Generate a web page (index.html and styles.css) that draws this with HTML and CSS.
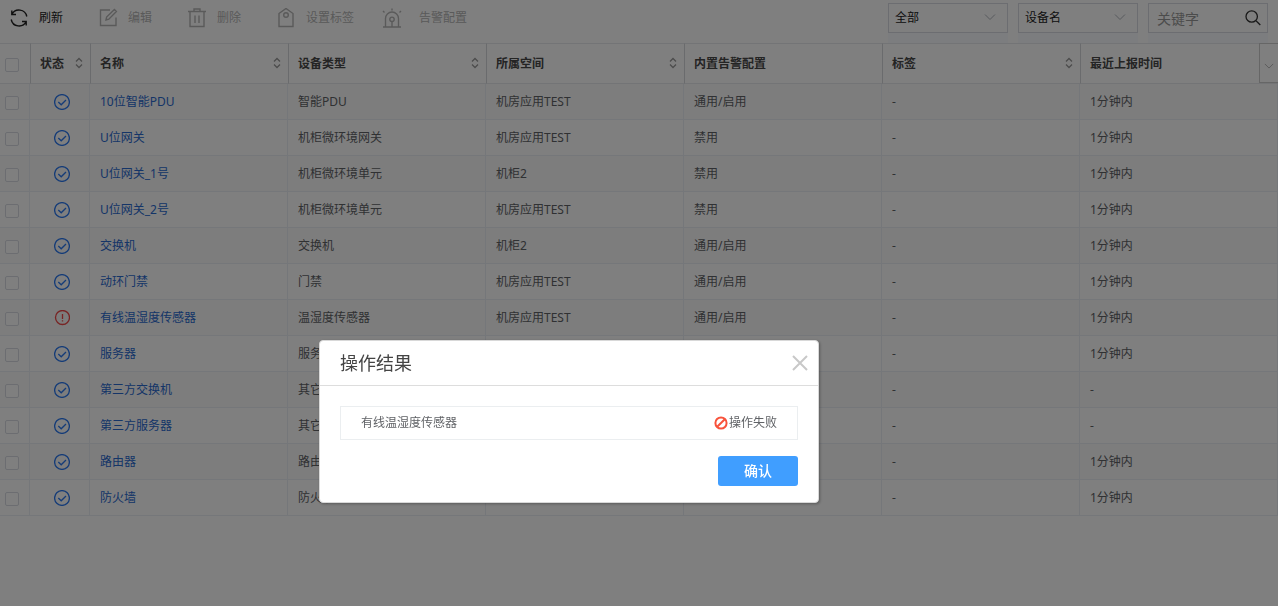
FILE: index.html
```html
<!DOCTYPE html>
<html lang="zh-CN">
<head>
  <meta charset="UTF-8" />
  <meta name="viewport" content="width=device-width, initial-scale=1.0"/>
  <title>设备管理</title>
  <link rel="stylesheet" href="styles.css">
</head>
<body>

  <svg class="sprite" aria-hidden="true">
    <symbol id="ok" viewBox="0 0 16 16">
      <circle cx="8" cy="8" r="7.4"/>
      <path d="M4.3 8L7.2 10.8L12 6"/>
    </symbol>
    <symbol id="warn" viewBox="0 0 16 16">
      <circle cx="8.5" cy="7.5" r="7"/>
      <path d="M8.5 4V9M8.5 10.2V11.4"/>
    </symbol>
    <symbol id="sort" viewBox="0 0 8 12">
      <path d="M1 4.5L4 1.5L7 4.5M1 7.5L4 10.5L7 7.5"/>
    </symbol>
    <symbol id="down" viewBox="0 0 12 8">
      <path d="M1 1.5L6 6.5L11 1.5"/>
    </symbol>
  </svg>

  <header class="toolbar">
    <div class="actions">
      <button type="button" class="action">
        <svg class="icon" viewBox="0 0 20 20"><path d="M1.8 2.5V6.5H6M1.8 6.5A8 8 0 0 1 16.8 8.5M16.2 17.5V13.5H12M16.2 13.5A8 8 0 0 1 1.2 11.5"/></svg>
        刷新
      </button>
      <button type="button" class="action" disabled>
        <svg class="icon" viewBox="0 0 20 20"><path d="M11 2H1.5V17.5H17V9.5M7 12L7.6 9L15.4 1.4L17.4 3.4L9.8 11.2Z"/></svg>
        编辑
      </button>
      <button type="button" class="action" disabled>
        <svg class="icon" viewBox="0 0 20 20"><path d="M0 3.5H18M2 3.5V18.5H16V3.5M6 3.5V1H12V3.5M7 7.5V15M11 7.5V15"/></svg>
        删除
      </button>
      <button type="button" class="action" disabled>
        <svg class="icon" viewBox="0 0 20 20"><path d="M2 5.5L9 .5L16 5.5V18.5H2Z"/><circle cx="9" cy="7" r="2.3"/></svg>
        设置标签
      </button>
      <button type="button" class="action" disabled>
        <svg class="icon icon-alarm" viewBox="0 0 20 20"><path d="M1 19H19M3.5 19V10.5A6.5 6.5 0 0 1 16.5 10.5V19M10 13.5V19M10 .5V2.5M1 3L2.5 4.5M19 3L17.5 4.5"/><circle cx="10" cy="11.3" r="2.2"/></svg>
        告警配置
      </button>
    </div>
    <div class="filters">
      <label class="field">
        <select aria-label="状态"><option>全部</option></select>
        <svg class="arrow"><use href="#down"/></svg>
      </label>
      <label class="field">
        <select aria-label="搜索字段"><option>设备名</option></select>
        <svg class="arrow"><use href="#down"/></svg>
      </label>
      <label class="field">
        <input type="text" placeholder="关键字" aria-label="关键字">
        <svg class="magnifier" viewBox="0 0 16 16"><circle cx="6.7" cy="6.5" r="5.7"/><path d="M11 10.8L15.3 15"/></svg>
      </label>
    </div>
  </header>

  <main class="list">
    <table>
      <colgroup>
        <col class="col-check"><col class="col-status">
        <col class="col-data"><col class="col-data"><col class="col-data"><col class="col-data"><col class="col-data">
        <col>
      </colgroup>
      <thead>
        <tr>
          <th class="check"><input type="checkbox" aria-label="全选"></th>
          <th>状态<svg class="sort"><use href="#sort"/></svg></th>
          <th>名称<svg class="sort"><use href="#sort"/></svg></th>
          <th>设备类型<svg class="sort"><use href="#sort"/></svg></th>
          <th>所属空间<svg class="sort"><use href="#sort"/></svg></th>
          <th>内置告警配置</th>
          <th>标签<svg class="sort"><use href="#sort"/></svg></th>
          <th>最近上报时间</th>
        </tr>
      </thead>
      <tbody id="rows"></tbody>
    </table>
    <button type="button" class="columns" aria-label="列设置"><svg><use href="#down"/></svg></button>
  </main>

  <div class="mask"></div>

  <section class="dialog" role="dialog" aria-labelledby="dialogTitle">
    <div class="dialog-head">
      <h2 id="dialogTitle">操作结果</h2>
      <button type="button" class="close" aria-label="关闭"><svg viewBox="0 0 16 16"><path d="M1 1L15 15M15 1L1 15"/></svg></button>
    </div>
    <div class="dialog-body">
      <div class="result">
        <span>有线温湿度传感器</span>
        <span class="fail"><svg viewBox="0 0 14 14"><circle cx="7" cy="7" r="5.6"/><path d="M3.2 10.8L10.8 3.2"/></svg>操作失败</span>
      </div>
      <button type="button" class="confirm">确认</button>
    </div>
  </section>

  <script>
    const devices = [
      ['ok', '10位智能PDU', '智能PDU', '机房应用TEST', '通用/启用', '-', '1分钟内'],
      ['ok', 'U位网关', '机柜微环境网关', '机房应用TEST', '禁用', '-', '1分钟内'],
      ['ok', 'U位网关_1号', '机柜微环境单元', '机柜2', '禁用', '-', '1分钟内'],
      ['ok', 'U位网关_2号', '机柜微环境单元', '机房应用TEST', '禁用', '-', '1分钟内'],
      ['ok', '交换机', '交换机', '机柜2', '通用/启用', '-', '1分钟内'],
      ['ok', '动环门禁', '门禁', '机房应用TEST', '通用/启用', '-', '1分钟内'],
      ['warn', '有线温湿度传感器', '温湿度传感器', '机房应用TEST', '通用/启用', '-', '1分钟内'],
      ['ok', '服务器', '服务器', '机柜2', '通用/启用', '-', '1分钟内'],
      ['ok', '第三方交换机', '其它', '机柜2', '通用/启用', '-', '-'],
      ['ok', '第三方服务器', '其它', '机柜2', '通用/启用', '-', '-'],
      ['ok', '路由器', '路由器', '机柜2', '通用/启用', '-', '1分钟内'],
      ['ok', '防火墙', '防火墙', '机柜2', '通用/启用', '-', '1分钟内']
    ];

    document.getElementById('rows').innerHTML = devices.map(([status, name, ...rest]) => `
      <tr>
        <td class="check"><input type="checkbox" aria-label="${name}"></td>
        <td class="status"><svg class="${status}"><use href="#${status}"/></svg></td>
        <td><a href="#">${name}</a></td>
        ${rest.map(text => `<td>${text}</td>`).join('')}
      </tr>`).join('');
  </script>
</body>
</html>
```
FILE: styles.css
```css
* {
  box-sizing: border-box;
}
body {
  margin: 0;
  font-family: "Noto Sans", "Noto Sans CJK SC", sans-serif;
  font-size: 12px;
  line-height: 18px;
  color: #606266;
  background: #fff;
}
svg {
  fill: none;
  stroke: currentColor;
}
button, input, select {
  font: inherit;
  color: inherit;
  margin: 0;
}
button {
  border: none;
  background: none;
  padding: 0;
}
.sprite {
  position: absolute;
  width: 0;
  height: 0;
}

/* toolbar */
.toolbar {
  display: flex;
  justify-content: space-between;
  height: 43px;
  padding: 3px 10px 0;
}
.actions {
  display: flex;
  gap: 36px;
  height: 30px;
}
.action {
  display: flex;
  align-items: center;
  gap: 9px;
  color: #222;
}
.action:disabled {
  color: #b4b4b4;
}
.icon {
  width: 20px;
  height: 20px;
  stroke-width: 1.4;
}
.icon-alarm {
  margin: 0 8px 0 -8px;
}
.filters {
  display: flex;
  gap: 10px;
}
.field {
  position: relative;
  width: 120px;
  background: #f9fafe;
}
.field select,
.field input {
  display: block;
  width: 100%;
  height: 30px;
  padding: 0 6px;
  border: 1px solid #d8dbe2;
  border-radius: 0;
  background: #fff;
  color: #222;
  appearance: none;
}
.field input {
  padding: 0 8px;
  font-size: 14px;
}
.field input::placeholder {
  color: #999;
}
.arrow {
  position: absolute;
  top: 10px;
  right: 12px;
  width: 12px;
  height: 8px;
  color: #b0b4bc;
}
.magnifier {
  position: absolute;
  top: 7px;
  right: 7px;
  width: 16px;
  height: 16px;
  color: #333;
  stroke-width: 1.3;
}

/* device table */
.list {
  position: relative;
}
table {
  width: 100%;
  table-layout: fixed;
  border-collapse: separate;
  border-spacing: 0;
}
.col-check {
  width: 30px;
}
.col-status {
  width: 60px;
}
.col-data {
  width: 198px;
}
th {
  position: relative;
  height: 41px;
  padding: 0 9px;
  border: 1px solid #e6e8ec;
  border-width: 1px 0 1px 1px;
  border-left-color: #d4d6da;
  text-align: left;
  color: #484848;
}
th.check {
  border-left: none;
}
td {
  height: 36px;
  padding: 0 10px;
  border: 1px solid #ebeef5;
  border-width: 0 1px 1px 0;
}
tbody tr:nth-child(odd) {
  background: #fafafa;
}
th.check,
td.check {
  padding: 3px 0 0 5px;
}
.check input {
  display: block;
  width: 14px;
  height: 14px;
  border: 1px solid #d8dbe2;
  border-radius: 2px;
  background: #fff;
  appearance: none;
}
.sort {
  position: absolute;
  top: 13px;
  right: 7px;
  width: 8px;
  height: 12px;
  color: #999;
  stroke-width: 1.3;
}
.status {
  padding: 0 0 0 24px;
}
.status svg {
  display: block;
  width: 16px;
  height: 16px;
  stroke-width: 1.3;
}
.ok {
  color: #2a78f0;
}
.warn {
  color: #f04848;
}
td a {
  color: #2a6ad0;
  text-decoration: none;
}
.columns {
  position: absolute;
  top: 0;
  right: 0;
  width: 19px;
  height: 40px;
  padding-top: 6px;
  border: 1px solid #ccc;
  border-right: none;
  background: #fff;
  color: #aaa;
}
.columns svg {
  width: 10px;
  height: 8px;
}

/* result dialog */
.mask {
  position: fixed;
  inset: 0;
  background: rgba(0, 0, 0, 0.5);
}
.dialog {
  position: fixed;
  top: 340px;
  left: 319px;
  width: 500px;
  border: 1px solid #d8d8d8;
  border-radius: 4px;
  background: #fff;
  box-shadow: 1px 1px 3px rgba(0, 0, 0, 0.3);
}
.dialog-head {
  display: flex;
  align-items: center;
  justify-content: space-between;
  height: 45px;
  padding: 0 10px 0 20px;
  border-bottom: 1px solid #ddd;
}
.dialog-head h2 {
  margin: 0;
  font-size: 18px;
  line-height: 24px;
  font-weight: 400;
  color: #444;
}
.close svg {
  display: block;
  width: 16px;
  height: 16px;
  color: #c8c8c8;
  stroke-width: 2;
}
.dialog-body {
  padding: 20px 20px 16px;
}
.result {
  display: flex;
  align-items: center;
  justify-content: space-between;
  height: 34px;
  padding: 0 20px;
  border: 1px solid #ebeef0;
}
.fail {
  display: flex;
  align-items: center;
}
.fail svg {
  width: 14px;
  height: 14px;
  margin-right: 1px;
  color: #f8533c;
  stroke-width: 2;
}
.confirm {
  display: block;
  width: 80px;
  height: 30px;
  margin: 16px 0 0 auto;
  border-radius: 3px;
  background: #409eff;
  color: #fff;
  font-size: 14px;
  font-weight: 500;
}
```
